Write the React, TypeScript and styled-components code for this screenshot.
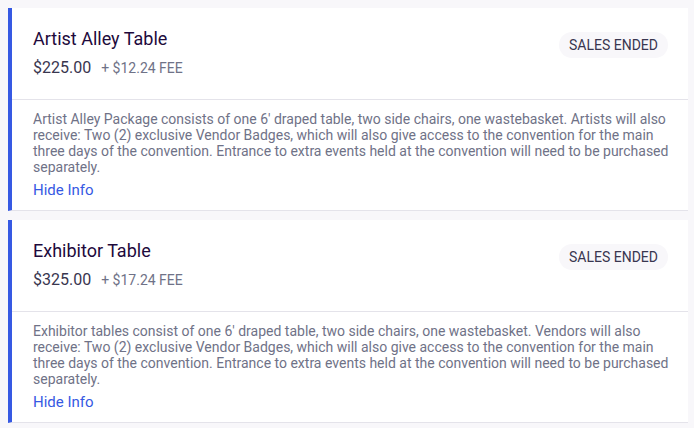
import styled, { createGlobalStyle } from 'styled-components'

const GlobalStyle = createGlobalStyle`
    body {
        margin: 0;
        background: #f8f7fa;
        font-family: Roboto, "Liberation Sans", sans-serif;
    }
`

const Page = styled.div`
    padding: 8px 6px 8px 8px;
    display: flex;
    flex-direction: column;
    gap: 9px;
`

const Card = styled.div`
    width: 676px;
    background: white;
    border-left: 4px solid #3659e3;
    border-bottom: 1px solid #e4e3ea;
`

const Header = styled.div`
    display: flex;
    justify-content: space-between;
    align-items: flex-start;
    padding: 19px 20px 21px 21px;
    border-bottom: 1px solid #e4e3ea;
`

const Title = styled.div`
    font-size: 18px;
    line-height: 24px;
    color: #1e0a3c;
`

const PriceRow = styled.div`
    display: flex;
    align-items: baseline;
    gap: 10px;
    margin-top: 7px;
    line-height: 20px;
`

const Price = styled.span`
    font-size: 16px;
    color: #39364f;
`

const Fee = styled.span`
    font-size: 14px;
    color: #6f7287;
`

const Badge = styled.div`
    margin-top: 5px;
    height: 26px;
    padding: 0 10px;
    border-radius: 13px;
    background: #f8f7fa;
    color: #39364f;
    font-size: 14px;
    line-height: 26px;
`

const Body = styled.div`
    padding: 11px 10px 10px 21px;
`

const Description = styled.p`
    margin: 0;
    font-size: 14px;
    line-height: 16px;
    color: #6f7287;
`

const HideLink = styled.a`
    display: block;
    margin-top: 5px;
    font-size: 15px;
    line-height: 20px;
    color: #3659e3;
    text-decoration: none;
    cursor: pointer;
`

interface Ticket {
    name: string
    price: string
    fee: string
    description: string
}

const tickets: Ticket[] = [
    {
        name: 'Artist Alley Table',
        price: '$225.00',
        fee: '+ $12.24 FEE',
        description:
            'Artist Alley Package consists of one 6′ draped table, two side chairs, one wastebasket. Artists will also receive: Two (2) exclusive Vendor Badges, which will also give access to the convention for the main three days of the convention. Entrance to extra events held at the convention will need to be purchased separately.',
    },
    {
        name: 'Exhibitor Table',
        price: '$325.00',
        fee: '+ $17.24 FEE',
        description:
            'Exhibitor tables consist of one 6′ draped table, two side chairs, one wastebasket. Vendors will also receive: Two (2) exclusive Vendor Badges, which will also give access to the convention for the main three days of the convention. Entrance to extra events held at the convention will need to be purchased separately.',
    },
]

export default function App() {
    return (
        <>
            <GlobalStyle />
            <Page>
                {tickets.map((ticket) => (
                    <Card key={ticket.name}>
                        <Header>
                            <div>
                                <Title>{ticket.name}</Title>
                                <PriceRow>
                                    <Price>{ticket.price}</Price>
                                    <Fee>{ticket.fee}</Fee>
                                </PriceRow>
                            </div>
                            <Badge>SALES ENDED</Badge>
                        </Header>
                        <Body>
                            <Description>{ticket.description}</Description>
                            <HideLink>Hide Info</HideLink>
                        </Body>
                    </Card>
                ))}
            </Page>
        </>
    )
}
